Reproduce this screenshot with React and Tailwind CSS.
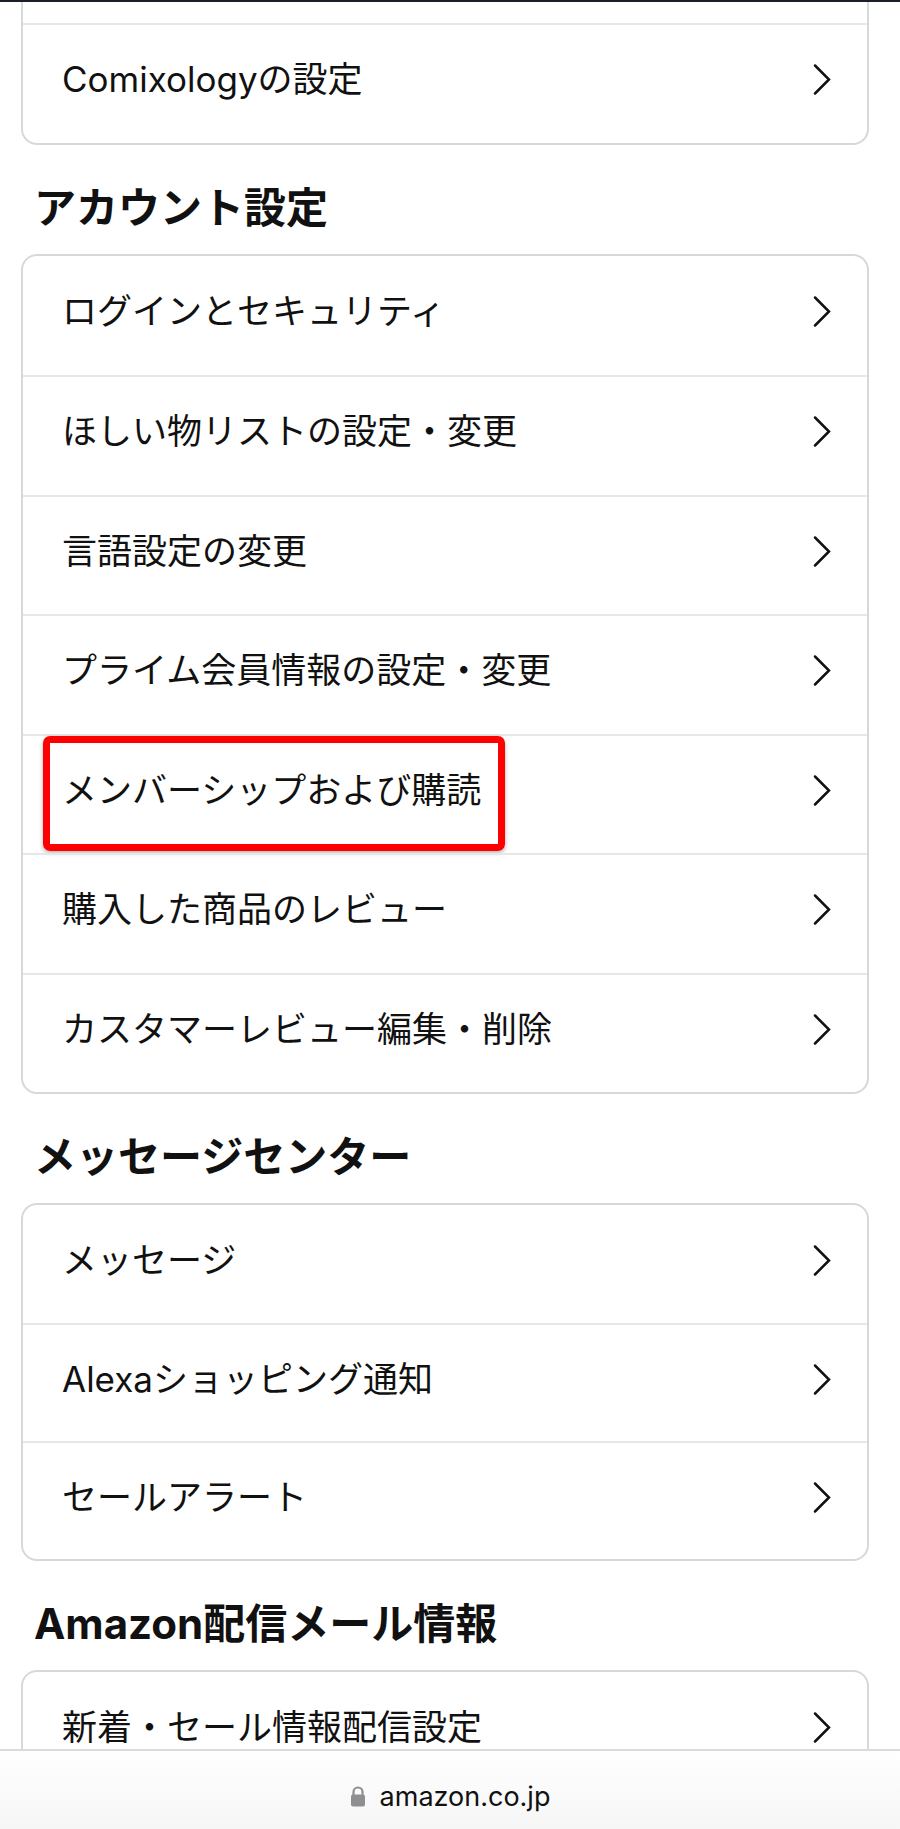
import React from "react";

const sections = [
  {
    title: "アカウント設定",
    tall: true,
    items: [
      "ログインとセキュリティ",
      "ほしい物リストの設定・変更",
      "言語設定の変更",
      "プライム会員情報の設定・変更",
      "メンバーシップおよび購読",
      "購入した商品のレビュー",
      "カスタマーレビュー編集・削除",
    ],
  },
  {
    title: "メッセージセンター",
    tall: false,
    items: ["メッセージ", "Alexaショッピング通知", "セールアラート"],
  },
];

function Chevron() {
  return (
    <svg width="20" height="33" viewBox="0 0 20 33" fill="none" className="shrink-0">
      <path d="M3 2.5 L17 16.5 L3 30.5" stroke="#111111" strokeWidth="2.5" strokeLinecap="round" strokeLinejoin="miter" />
    </svg>
  );
}

function Lock() {
  return (
    <svg width="16" height="21" viewBox="0 0 16 21" fill="none">
      <path d="M3.5 9 V6 a4.5 4.5 0 0 1 9 0 V9" stroke="#8e8e93" strokeWidth="2.2" />
      <rect x="1" y="8.5" width="14" height="12" rx="2" fill="#8e8e93" />
    </svg>
  );
}

function Row({ label, first, highlight, tall = true }) {
  return (
    <div
      className={
        "relative flex items-center justify-between pb-[8px] pl-[39px] pr-[35px] " +
        (tall ? "h-[119.5px] " : "h-[118px] ") +
        (first ? "" : "border-t-2 border-[#e7e7e7]")
      }
    >
      <span className="text-[35px] leading-none text-[#111111]">{label}</span>
      <Chevron />
      {highlight && (
        <div className="absolute left-[20px] top-0 h-[115px] w-[462px] rounded-[7px] border-[7px] border-[#ff0000] shadow-[0_2px_4px_rgba(0,0,0,0.3)]" />
      )}
    </div>
  );
}

function Heading({ children }) {
  return (
    <h2 className="ml-[34px] mt-[42px] mb-[25px] text-[42px] font-bold leading-[42px] text-[#111111]">
      {children}
    </h2>
  );
}

export default function App() {
  return (
    <div className="h-[1829px] w-[900px] overflow-hidden bg-white font-['Inter','Noto_Sans_CJK_JP',sans-serif]">
      <div className="h-[2px] bg-[#1b1f2a]" />

      <div className="ml-[21px] w-[848px] overflow-hidden rounded-b-[16px] border-2 border-t-0 border-[#d5d9d9]">
        <div className="h-[21px]" />
        <Row label="Comixologyの設定" />
      </div>

      {sections.map((s) => (
        <div key={s.title}>
          <Heading>{s.title}</Heading>
          <div className="ml-[21px] w-[848px] overflow-hidden rounded-[16px] border-2 border-[#d5d9d9]">
            {s.items.map((item, i) => (
              <Row
                key={item}
                label={item}
                tall={s.tall}
                first={i === 0}
                highlight={item === "メンバーシップおよび購読"}
              />
            ))}
          </div>
        </div>
      ))}

      <Heading>Amazon配信メール情報</Heading>
      <div className="ml-[21px] h-[79px] w-[848px] overflow-hidden rounded-t-[16px] border-2 border-b-0 border-[#d5d9d9]">
        <Row label="新着・セール情報配信設定" first />
      </div>

      <div className="flex h-[81px] items-center justify-center gap-[14px] border-t-2 border-[#dadada] bg-gradient-to-b from-white to-[#f6f6f6] pt-[12px]">
        <Lock />
        <span className="font-['Inter',sans-serif] text-[27px] leading-none text-[#111111]">amazon.co.jp</span>
      </div>
    </div>
  );
}
